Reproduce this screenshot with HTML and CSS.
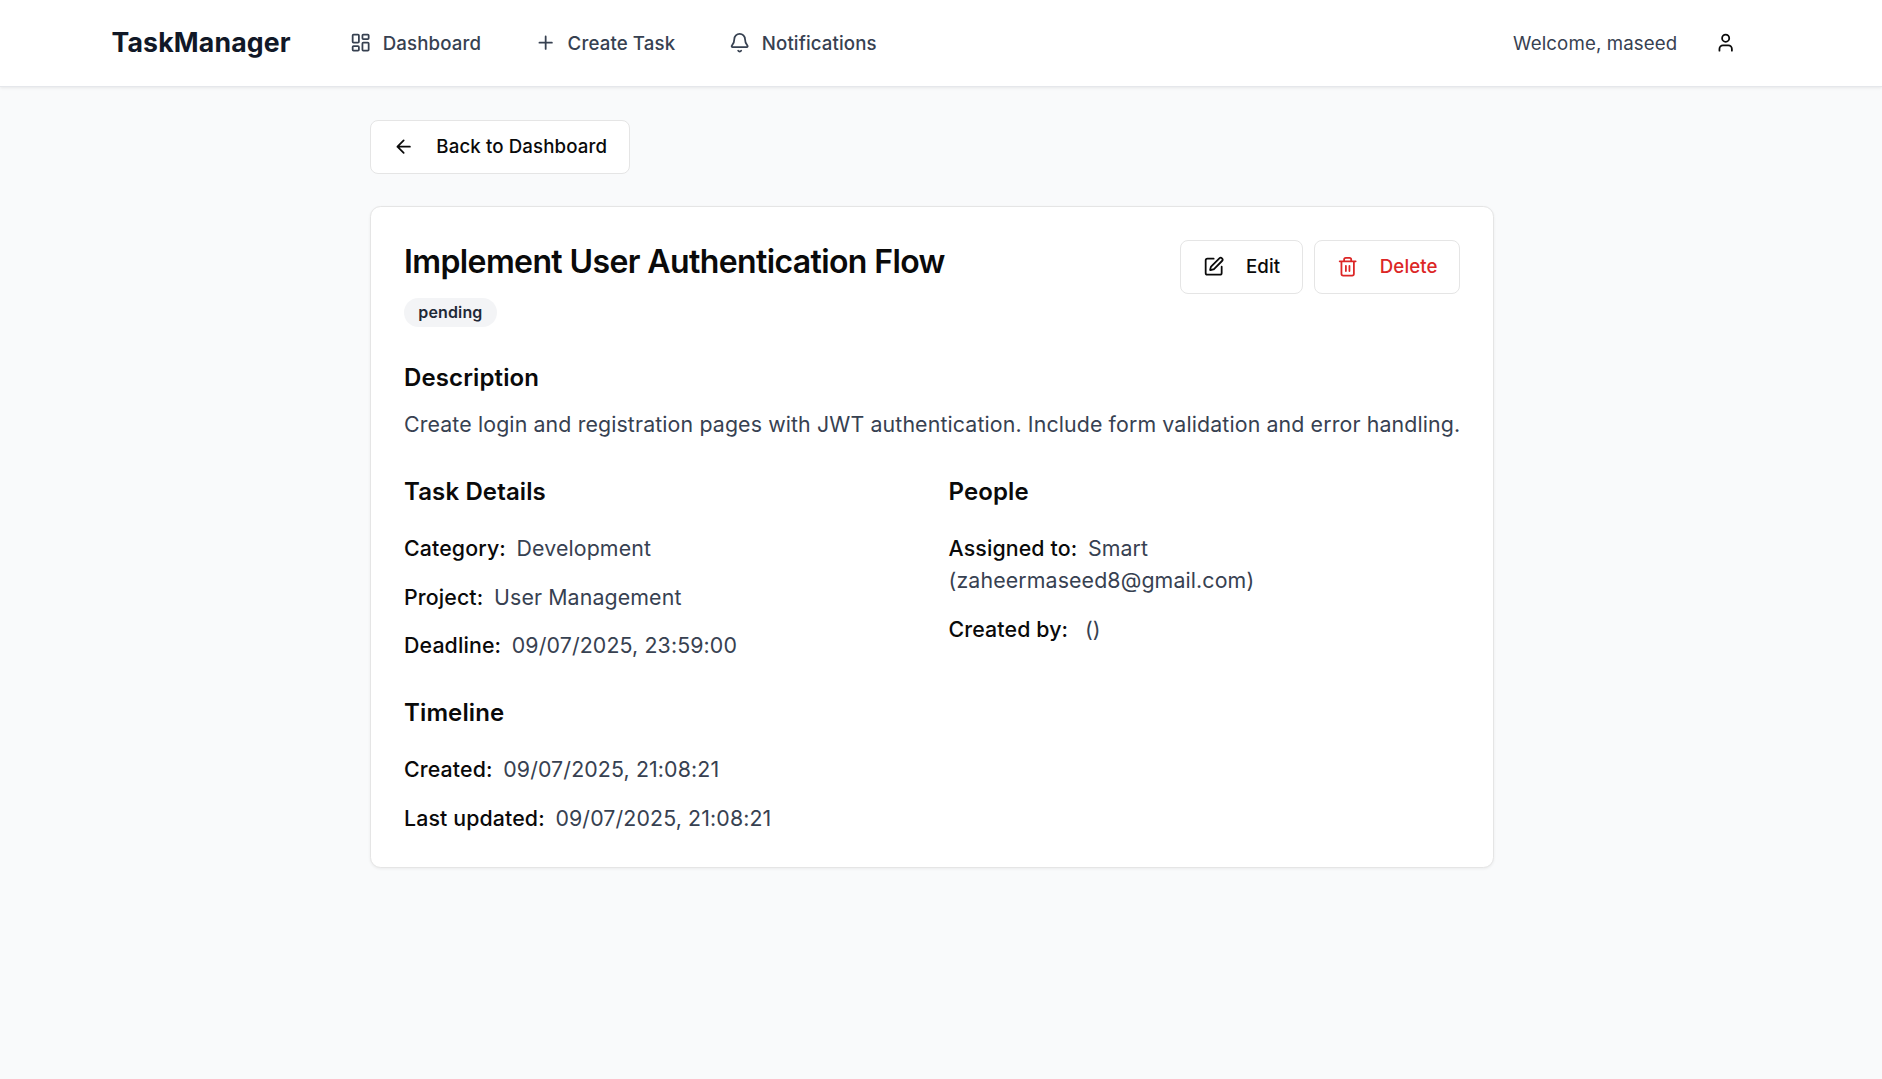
FILE: index.html
```html
<!DOCTYPE html>
<html lang="en">
<head>
<meta charset="utf-8">
<title>TaskManager</title>
<link rel="stylesheet" href="styles.css">
</head>
<body>
<header class="topbar">
  <div class="topbar-inner">
    <a class="brand">TaskManager</a>
    <nav class="nav">
      <a class="nav-link"><svg class="icon" viewBox="0 0 24 24"><rect width="7" height="9" x="3" y="3" rx="1"/><rect width="7" height="5" x="14" y="3" rx="1"/><rect width="7" height="9" x="14" y="12" rx="1"/><rect width="7" height="5" x="3" y="16" rx="1"/></svg><span class="nav-text">Dashboard</span></a>
      <a class="nav-link"><svg class="icon" viewBox="0 0 24 24"><path d="M5 12h14M12 5v14"/></svg><span class="nav-text">Create Task</span></a>
      <a class="nav-link"><svg class="icon" viewBox="0 0 24 24"><path d="M10.268 21a2 2 0 0 0 3.464 0"/><path d="M3.262 15.326A1 1 0 0 0 4 17h16a1 1 0 0 0 .74-1.673C19.41 13.956 18 12.499 18 8A6 6 0 0 0 6 8c0 4.499-1.411 5.956-2.738 7.326"/></svg><span class="nav-text">Notifications</span></a>
    </nav>
    <div class="account">
      <span class="welcome">Welcome, maseed</span>
      <button class="account-button" aria-label="Account"><svg class="icon" viewBox="0 0 24 24"><path d="M19 21v-2a4 4 0 0 0-4-4H9a4 4 0 0 0-4 4v2"/><circle cx="12" cy="7" r="4"/></svg></button>
    </div>
  </div>
</header>
<main class="page">
  <button class="button"><svg class="icon" viewBox="0 0 24 24"><path d="m12 19-7-7 7-7M19 12H5"/></svg><span class="button-text">Back to Dashboard</span></button>
  <article class="card">
    <div class="card-header">
      <div>
        <h1 class="title">Implement User Authentication Flow</h1>
        <span class="badge">pending</span>
      </div>
      <div class="actions">
        <button class="button"><svg class="icon" viewBox="0 0 24 24"><path d="M12 3H5a2 2 0 0 0-2 2v14a2 2 0 0 0 2 2h14a2 2 0 0 0 2-2v-7"/><path d="M18.375 2.625a1 1 0 0 1 3 3l-9.013 9.014a2 2 0 0 1-.853.505l-2.873.84a.5.5 0 0 1-.62-.62l.84-2.873a2 2 0 0 1 .506-.852z"/></svg><span class="button-text">Edit</span></button>
        <button class="button danger"><svg class="icon" viewBox="0 0 24 24"><path d="M3 6h18M19 6v14c0 1-1 2-2 2H7c-1 0-2-1-2-2V6M8 6V4c0-1 1-2 2-2h4c1 0 2 1 2 2v2M10 11v6M14 11v6"/></svg><span class="button-text">Delete</span></button>
      </div>
    </div>
    <section class="section">
      <h2 class="heading heading-tight">Description</h2>
      <p class="description">Create login and registration pages with JWT authentication. Include form validation and error handling.</p>
    </section>
    <div class="columns section">
      <section>
        <h2 class="heading">Task Details</h2>
        <div class="rows">
          <div><span class="label">Category:</span><span class="value">Development</span></div>
          <div><span class="label">Project:</span><span class="value">User Management</span></div>
          <div><span class="label">Deadline:</span><span class="value">09/07/2025, 23:59:00</span></div>
        </div>
      </section>
      <section>
        <h2 class="heading">People</h2>
        <div class="rows">
          <div><span class="label">Assigned to:</span><span class="value">Smart<br>(zaheermaseed8@gmail.com)</span></div>
          <div><span class="label">Created by:</span><span class="value">&nbsp;()</span></div>
        </div>
      </section>
    </div>
    <section class="section">
      <h2 class="heading">Timeline</h2>
      <div class="rows rows-timeline">
        <div><span class="label">Created:</span><span class="value">09/07/2025, 21:08:21</span></div>
        <div><span class="label">Last updated:</span><span class="value">09/07/2025, 21:08:21</span></div>
      </div>
    </section>
  </article>
</main>
</body>
</html>
```
FILE: styles.css
```css
* { box-sizing: border-box; }
body {
  margin: 0;
  min-height: 100vh;
  background: #f9fafb;
  color: #0a0a0a;
  font-family: Inter, sans-serif;
  font-size: 21.333px;
  line-height: 32px;
  letter-spacing: 0.125px;
}
h1, h2, p { margin: 0; }
.icon {
  flex: none;
  width: 21.333px;
  height: 21.333px;
  fill: none;
  stroke: currentColor;
  stroke-width: 2;
  stroke-linecap: round;
  stroke-linejoin: round;
}
.topbar {
  height: 87px;
  background: #fff;
  border-bottom: 1px solid #e5e7eb;
  box-shadow: 0 1px 3px rgba(0, 0, 0, 0.08);
}
.topbar-inner {
  display: flex;
  align-items: center;
  height: 86px;
  padding: 0 130px 0 111.5px;
}
.brand {
  padding-bottom: 2px;
  font-size: 26.667px;
  font-weight: 700;
  letter-spacing: 0.15px;
  color: #111827;
}
.nav {
  display: flex;
  gap: 53.7px;
  margin-left: 59px;
}
.nav-link {
  display: flex;
  align-items: center;
  gap: 11.5px;
  font-size: 18.667px;
  font-weight: 500;
  color: #374151;
}
.nav-text, .button-text, .welcome { padding-top: 1.5px; }
.account {
  display: flex;
  align-items: center;
  gap: 21.333px;
  margin-left: auto;
}
.welcome { font-size: 18.667px; color: #374151; }
.account-button {
  display: flex;
  align-items: center;
  justify-content: center;
  width: 53.333px;
  height: 53.333px;
  padding: 0;
  border: 0;
  background: none;
  color: #0a0a0a;
}
.page {
  width: 1124px;
  margin-left: 370px;
  padding-top: 33px;
}
.button {
  display: inline-flex;
  align-items: center;
  gap: 21.6px;
  height: 53.5px;
  padding: 0 21.3px 0 22.3px;
  border: 1px solid #e5e5e5;
  border-radius: 8px;
  background: #fff;
  color: #0a0a0a;
  font: 500 18.667px/26.667px Inter, sans-serif;
  letter-spacing: 0.12px;
}
.danger { color: #dc2626; }
.page > .button { display: flex; padding: 0 22px 0 22.4px; }
.card {
  margin-top: 32.5px;
  padding: 33px 33px 33.1px;
  border: 1px solid #e5e5e5;
  border-radius: 10.667px;
  background: #fff;
  box-shadow: 0 1px 3px rgba(0, 0, 0, 0.06);
}
.card-header {
  display: flex;
  justify-content: space-between;
  align-items: flex-start;
}
.title {
  padding-top: 1px;
  font-size: 32px;
  line-height: 42.667px;
  font-weight: 600;
  letter-spacing: -0.61px;
}
.badge {
  display: block;
  width: fit-content;
  margin-top: 14.333px;
  padding: 4px 14.333px;
  border-radius: 15px;
  background: #f3f4f6;
  color: #1f2937;
  font-size: 16px;
  line-height: 21px;
  font-weight: 600;
  letter-spacing: 0.14px;
}
.actions { display: flex; gap: 11px; }
.section { margin-top: 32px; }
.heading {
  margin-bottom: 22.2px;
  font-size: 24px;
  line-height: 37.333px;
  font-weight: 600;
}
.heading-tight { margin-bottom: 11.667px; }
.description { line-height: 33.667px; color: #374151; white-space: nowrap; }
.columns {
  display: grid;
  grid-template-columns: 1fr 1fr;
  gap: 33px;
}
.columns.section { margin-top: 31.1px; }
.rows { display: grid; gap: 16.4px; }
.rows-timeline { gap: 17px; }
.columns + .section { margin-top: 32.5px; }
.label { font-weight: 500; }
.value { margin-left: 10.667px; color: #374151; }
```
